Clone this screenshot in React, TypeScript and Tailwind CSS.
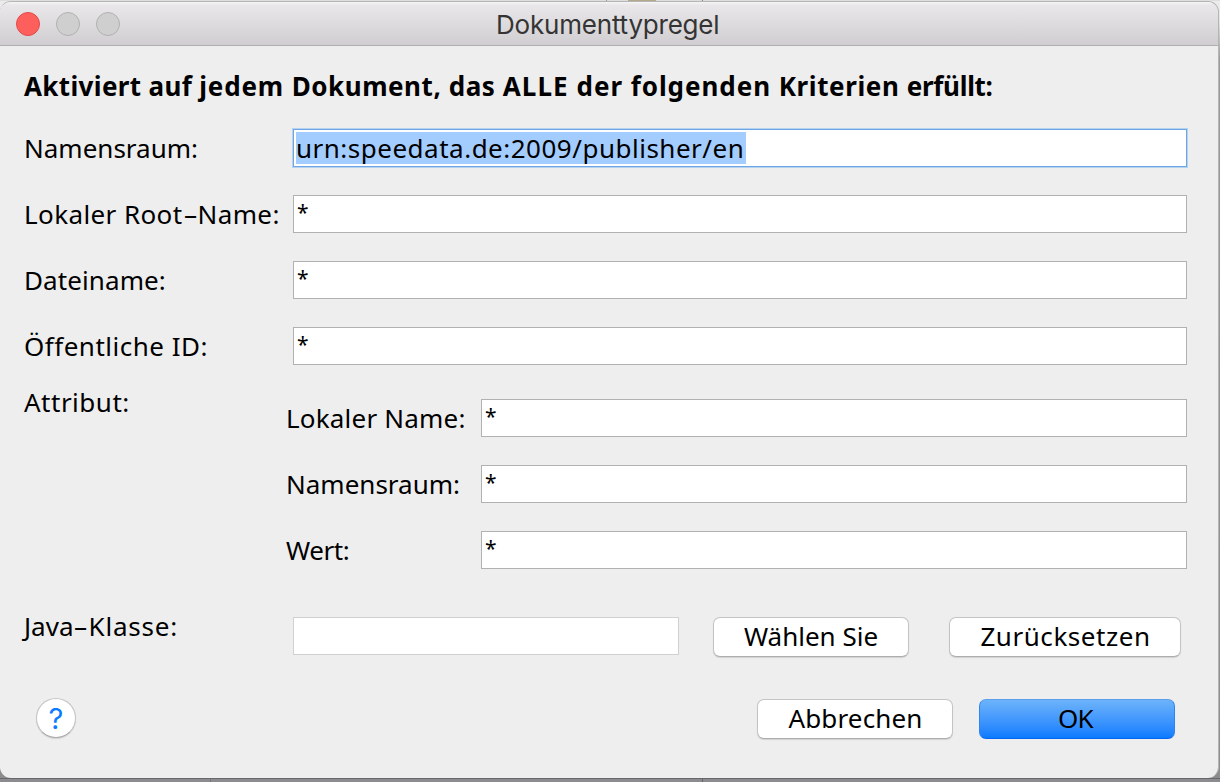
import type { ReactNode } from "react";

function Label({ children, className = "" }: { children: ReactNode; className?: string }) {
  return <span className={`h-[38px] whitespace-nowrap leading-[38px] ${className}`}>{children}</span>;
}

function Dash() {
  return <span className="inline-block w-[15px] scale-x-[1.75] text-center tracking-normal">-</span>;
}

function Field({ className = "" }: { className?: string }) {
  return (
    <div className={`h-[38px] border border-[#b1b1b1] bg-white pl-[3px] text-[21px] leading-[32px] ${className}`}>*</div>
  );
}

function Button({ children, className = "" }: { children: ReactNode; className?: string }) {
  return (
    <button className={`h-10 rounded-[7px] text-center whitespace-nowrap ${className}`}>
      {children}
    </button>
  );
}

const plain = "border border-[#c4c4c4] border-b-[#adadad] bg-white shadow-[0_1px_1px_rgba(0,0,0,0.12)]";

export default function App() {
  return (
    <div className="flex h-[782px] w-[1220px] flex-col overflow-hidden bg-[linear-gradient(to_bottom,#ececec_0px,#e6e6e6_20px,#9a9a9a_60px,#8c8c8e_100%)] font-['Noto_Sans',sans-serif] text-[26px] text-black">
      <div className="flex h-px w-full shrink-0 bg-[#dedede]">
        <div className="ml-[606px] h-px w-px bg-[#999]" />
        <div className="ml-[21px] h-px w-[28px] bg-[#b5a88a]" />
        <div className="ml-[46px] h-px w-px bg-[#888]" />
      </div>
      <div className="flex h-[777px] w-[1219px] shrink-0 flex-col overflow-hidden rounded-[11px] border-t border-r border-[#b5b5b5] bg-[#eeeeee]">
        <div className="flex h-[44px] shrink-0 items-center border-b border-[#b0aeb1] bg-[linear-gradient(to_bottom,#f7f6f7_0px,#e9e7e9_3px,#d1ced1_100%)] pl-4">
          <div className="flex w-[481px] gap-4">
            <div className="size-6 rounded-full border border-[#e2494a] bg-[#fd605c]" />
            <div className="size-6 rounded-full border border-[#b2b0b2] bg-[#cfcfcf]" />
            <div className="size-6 rounded-full border border-[#b2b0b2] bg-[#cfcfcf]" />
          </div>
          <h1 className="-ml-[1px] pt-[2px] font-['Inter',sans-serif] text-[26px] leading-[40px] tracking-[-0.2px] whitespace-nowrap text-[#343434]">
            Dokumenttypregel
          </h1>
        </div>

        <h2 className="mt-[21px] ml-6 h-[38px] shrink-0 text-[26px] leading-[38px] font-bold tracking-[0.6px] whitespace-nowrap">
          <span className="tracking-[0.35px]">Aktiviert auf </span>
          <span className="tracking-[0.85px]">jedem </span>
          <span className="tracking-[0.55px]">Dokument, das </span>
          <span className="tracking-[1.1px]">ALLE </span>
          <span className="tracking-[0.95px]">der folgenden </span>
          Kriterien <span className="tracking-[-0.3px]">erfüllt:</span>
        </h2>

        <div className="mt-[24px] ml-6 grid w-[1163px] shrink-0 grid-cols-[269px_894px] gap-y-7">
          <Label>Namensraum:</Label>
          <div className="h-[38px] border border-[#6fa6e2] bg-white p-[2px] shadow-[0_0_0_1px_#b4d3f2]">
            <span className="block h-8 w-[450px] bg-[#a4cdff] leading-8 tracking-[0.5px] whitespace-nowrap">
              urn:speedata.de:2009/publisher/en
            </span>
          </div>
          <Label className="tracking-[0.4px]">
            Lokaler Root<Dash />
            <span>Name:</span>
          </Label>
          <Field />
          <Label className="tracking-[0.1px]">Dateiname:</Label>
          <Field />
          <Label className="tracking-[0.5px]">Öffentliche ID:</Label>
          <Field />
        </div>

        <div className="mt-[18px] ml-6 flex shrink-0">
          <Label className="w-[262px] tracking-[0.5px]">Attribut:</Label>
          <div className="mt-4 grid grid-cols-[195px_706px] gap-y-7">
            <Label className="tracking-[0.2px]">Lokaler Name:</Label>
            <Field />
            <Label>Namensraum:</Label>
            <Field />
            <Label className="tracking-[-0.4px]">Wert:</Label>
            <Field />
          </div>
        </div>

        <div className="mt-[38px] ml-6 flex h-[50px] shrink-0">
          <Label className="w-[269px]">
            Java<Dash />
            <span className="tracking-[0.8px]">Klasse:</span>
          </Label>
          <div className="mt-[10px] mr-[34px] h-[38px] w-[386px] border border-[#d0d0d0] bg-white" />
          <Button className={`mt-[10px] mr-10 w-[196px] pb-[2px] leading-[36px] ${plain}`}>Wählen Sie</Button>
          <Button className={`mt-[10px] w-[232px] pb-[2px] pl-px leading-[36px] tracking-[0.55px] ${plain}`}>Zurücksetzen</Button>
        </div>

        <div className="mt-[41px] ml-9 flex shrink-0 items-start">
          <button className="size-10 rounded-full border border-[#c4c4c4] border-b-[#adadad] bg-white pt-px text-center font-['Inter',sans-serif] text-[29px] leading-[37px] text-[#0a7aff] shadow-[0_1px_1px_rgba(0,0,0,0.12)]">
            ?
          </button>
          <Button className={`mt-px ml-[681px] w-[196px] pb-[2px] pl-px leading-[36px] tracking-[0.15px] ${plain}`}>Abbrechen</Button>
          <Button className="mt-px ml-[26px] w-[196px] border border-t-[#5b9fec] border-r-[#2f85f0] border-b-[#0a66f2] border-l-[#2f85f0] bg-linear-to-b from-[#6cb3fa] to-[#077bff] pr-[3px] pb-[2px] leading-[36px] tracking-[-0.8px]">
            OK
          </Button>
        </div>
      </div>
      <div className="flex h-[4px] w-full shrink-0 border-t border-[#68686b] bg-[#8c8c90]">
        <div className="ml-[210px] w-px bg-[#77777a]" />
        <div className="ml-[491px] w-px bg-[#66666a]" />
      </div>
    </div>
  );
}
